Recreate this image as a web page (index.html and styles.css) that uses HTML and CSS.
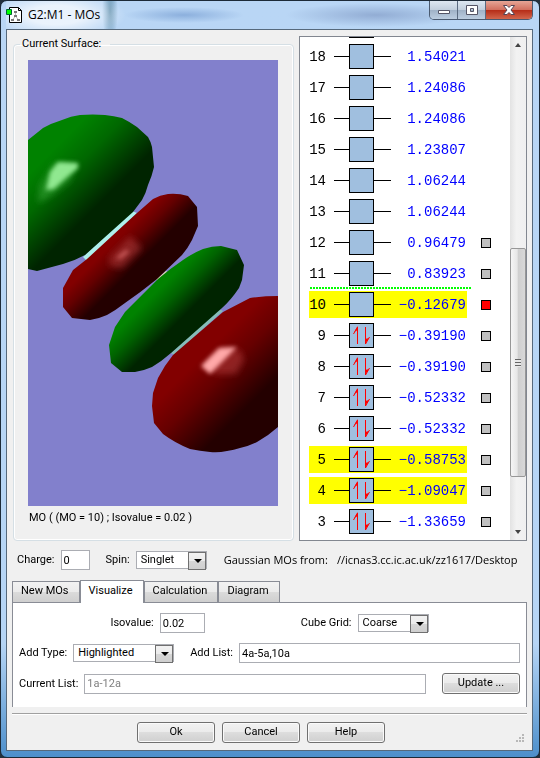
FILE: index.html
```
<!DOCTYPE html>
<html lang="en">
<head>
    <meta charset="UTF-8">
    <meta name="viewport" content="width=device-width, initial-scale=1.0">
    <title>G2:M1 - MOs</title>
    <link rel="stylesheet" href="styles.css">
</head>
<body>
    <div class="window">
        <header class="titlebar">
            <svg class="app-icon" width="17" height="17" viewBox="0 0 17 17">
                <path d="M3.5 .5h9l3 3v12h-12z" fill="#fff" stroke="#000"/>
                <path d="M12.500 .5v3h3" fill="none" stroke="#000"/>
                <path d="M9.500 5v4l-3 4M9.500 9l3 4" fill="none" stroke="#bbb"/>
                <path d="M8 4h3v2H8zM8 8h3v2H8zM5 12h3v2H5zM11 12h3v2h-3z" fill="#777"/>
                <path d="M.5 2.500h5v5h-5z" fill="#0f0" stroke="#063"/>
            </svg>
            <h1>G2:M1 - MOs</h1>
            <div class="window-buttons">
                <button type="button" class="minimize" aria-label="Minimize">
                    <svg width="14" height="12" viewBox="0 0 14 12"><path d="M1.500 6.500h11v3h-11z" fill="#fff" stroke="#556"/></svg>
                </button>
                <button type="button" class="maximize" aria-label="Maximize">
                    <svg width="14" height="12" viewBox="0 0 14 12"><path d="M1.500 1.500h11v9h-11zM5.500 4.500v3h3v-3z" fill="#fff" fill-rule="evenodd" stroke="#556"/></svg>
                </button>
                <button type="button" class="close" aria-label="Close">
                    <svg width="14" height="12" viewBox="0 0 14 12"><path d="M1.500 1.500h3.500l2 2 2-2h3.500l-3.500 4.500 3.500 4.500h-3.500l-2-2-2 2h-3.500l3.500-4.500z" fill="#fff" stroke="#545"/></svg>
                </button>
            </div>
        </header>

        <main class="client">
            <div class="top">
                <fieldset class="surface">
                    <legend>Current Surface:</legend>
                    <svg class="view" viewBox="0 0 250 446" preserveAspectRatio="xMidYMid slice">
                        <defs>
                            <linearGradient id="g1" gradientUnits="userSpaceOnUse" x1="40" y1="75" x2="90" y2="125">
                                <stop offset="0" stop-color="#008200"/><stop offset=".4" stop-color="#006800"/><stop offset="1" stop-color="#002400"/>
                            </linearGradient>
                            <linearGradient id="r1" gradientUnits="userSpaceOnUse" x1="134" y1="134" x2="157" y2="157">
                                <stop offset="0" stop-color="#820000"/><stop offset=".4" stop-color="#640000"/><stop offset="1" stop-color="#240000"/>
                            </linearGradient>
                            <linearGradient id="g2" gradientUnits="userSpaceOnUse" x1="180" y1="180" x2="206" y2="206">
                                <stop offset="0" stop-color="#008200"/><stop offset=".4" stop-color="#006400"/><stop offset="1" stop-color="#002400"/>
                            </linearGradient>
                            <linearGradient id="r2" gradientUnits="userSpaceOnUse" x1="230" y1="240" x2="278" y2="288">
                                <stop offset="0" stop-color="#820000"/><stop offset=".4" stop-color="#660000"/><stop offset="1" stop-color="#240000"/>
                            </linearGradient>
                            <filter id="soft" x="-50%" y="-50%" width="200%" height="200%"><feGaussianBlur stdDeviation="3"/></filter>
                            <filter id="shine" x="-50%" y="-50%" width="200%" height="200%"><feGaussianBlur stdDeviation="2"/></filter>
                        </defs>
                        <rect width="250" height="446" fill="#8280cc"/>
                        <path d="M55 197L104 151l5 2L59 201z" fill="#aef0ec"/>
                        <path d="M128 219l10-8 3 2-10 8z" fill="#d8d0b8"/>
                        <path d="M143 293L191 249l4 2-49 44z" fill="#86bcb8"/>
                        <path fill="url(#g1)" d="M0 80L15 68Q24 63 34 60Q43 56 52 55Q65 54 77 55Q86 56 94 58Q102 62 109 67L120 77Q123 82 124 87L126 107Q124 116 120 125Q118 133 114 140L105 152 57 195Q46 201 35 204L9 211 0 209z"/>
                        <path fill="url(#r1)" d="M109 153L125 139Q132 135 140 134Q150 133 160 136L169 147 170 166 164 180Q160 188 154 195L129 219Q113 232 97 243Q88 250 79 255Q70 259 62 260L44 258 35 247V228L45 210 59 199z"/>
                        <path fill="url(#g2)" d="M130 219Q143 208 155 200Q165 193 175 189Q184 186 193 186L209 190 216 205 214 220 211 228Q203 240 194 248L143 293Q134 301 124 307Q115 311 107 312H94L83 303 81 285 87 267 97 252z"/>
                        <path fill="url(#r2)" d="M195 252L222 238Q236 236 250 236V367Q240 376 229 382 221 386 212 388 206 390 199 391 190 393 182 392 172 391 162 389 147 383 135 374L126 363 124 346 125 333 130 318Q136 306 145 295z"/>
                        <g filter="url(#soft)">
                            <path d="M12 125l14-22 22 2-6 16-18 14-14 8z" fill="#40b040" opacity=".5"/>
                            <path d="M82 196l20-20 12 12-20 20-12-2z" fill="#b84040" opacity=".5"/>
                            <path d="M176 306l18-18 18 2 4 10-8 14h-20z" fill="#b84040" opacity=".5"/>
                        </g>
                        <g filter="url(#shine)">
                            <path d="M18 130l4-18 8-10 20 1 0 5-12 10-12 11z" fill="#90e890"/>
                            <path d="M88 198l9-8 5 1-9 8z" fill="#c85858"/>
                            <path d="M173 306l18-18 18-1-20 20-7 7z" fill="#ffa8a8"/>
                        </g>
                    </svg>
                    <p class="caption">MO ( (MO = 10) ; Isovalue = 0.02 )</p>
                </fieldset>

                <div class="mo-box">
                    <ol class="mo-list" id="moList"></ol>
                    <div class="scrollbar">
                        <span class="arrow up"></span>
                        <div class="track"><div class="thumb"></div></div>
                        <span class="arrow down"></span>
                    </div>
                </div>
            </div>

            <div class="info">
                <label for="charge">Charge:</label>
                <input type="text" id="charge" class="w-charge" value="0">
                <label for="spin">Spin:</label>
                <span class="select w-spin"><select id="spin"><option>Singlet</option><option>Triplet</option></select></span>
                <p class="source"><span>Gaussian MOs from:</span><span>//icnas3.cc.ic.ac.uk/zz1617/Desktop</span></p>
            </div>

            <div class="tabs" role="tablist">
                <button type="button" role="tab">New MOs</button>
                <button type="button" role="tab" class="active" aria-selected="true">Visualize</button>
                <button type="button" role="tab">Calculation</button>
                <button type="button" role="tab">Diagram</button>
            </div>
            <div class="panel" role="tabpanel">
                <div class="row centered">
                    <div class="field">
                        <label for="isovalue">Isovalue:</label>
                        <input type="text" id="isovalue" class="w-iso" value="0.02">
                    </div>
                    <div class="field">
                        <label for="grid">Cube Grid:</label>
                        <span class="select w-spin"><select id="grid"><option>Coarse</option><option>Medium</option><option>Fine</option></select></span>
                    </div>
                </div>
                <div class="row">
                    <div class="field">
                        <label for="addType">Add Type:</label>
                        <span class="select w-type"><select id="addType"><option>Highlighted</option><option>All</option></select></span>
                    </div>
                    <div class="field grow">
                        <label for="addList">Add List:</label>
                        <input type="text" id="addList" value="4a-5a,10a">
                    </div>
                </div>
                <div class="row">
                    <div class="field grow">
                        <label for="currentList">Current List:</label>
                        <input type="text" id="currentList" value="1a-12a" disabled>
                    </div>
                    <button type="button" class="btn">Update ...</button>
                </div>
            </div>

            <footer class="footer">
                <button type="button" class="btn">Ok</button>
                <button type="button" class="btn">Cancel</button>
                <button type="button" class="btn">Help</button>
                <svg class="grip" width="8" height="8" viewBox="0 0 8 8" fill="#b8b8b8"><path d="M6 0h2v2H6zM3 3h2v2H3zM6 3h2v2H6zM0 6h2v2H0zM3 6h2v2H3zM6 6h2v2H6z"/></svg>
            </footer>
        </main>
    </div>

    <script src="orbitals.js"></script>
</body>
</html>
```
FILE: styles.css
```
* {
    box-sizing: border-box;
}
body {
    margin: 0;
    background: #23303c;
    font-family: Roboto, "Liberation Sans", sans-serif;
    font-size: 11px;
    line-height: 16px;
    color: #000;
}
h1, p, ol {
    margin: 0;
    padding: 0;
    font-weight: normal;
}
button, input, select {
    font: inherit;
    color: inherit;
    margin: 0;
}
.window {
    display: flex;
    flex-direction: column;
    min-height: 100vh;
    padding: 0 6px 6px 5px;
    border: 1px solid #1c2a38;
    border-radius: 7px;
    background: linear-gradient(to bottom, #b9d6f5 0, #b6d5f5 85%, #4d8fcb 100%);
}

/* title bar */
.titlebar {
    display: flex;
    align-items: center;
    height: 28px;
    background:
        radial-gradient(ellipse 70px 24px at 50px 14px, rgba(255, 255, 255, 0.7) 40%, transparent),
        radial-gradient(ellipse 8px 30px at 104px 10px, #5f8fae, transparent),
        radial-gradient(ellipse 60px 8px at 178px 14px, rgba(110, 150, 205, 0.6), transparent),
        radial-gradient(ellipse 90px 12px at 370px 14px, rgba(120, 145, 190, 0.6), transparent);
}
.app-icon {
    flex: none;
}
h1 {
    flex: 1;
    margin-left: 5px;
    font-family: "Open Sans", sans-serif;
    font-size: 12px;
}
.window-buttons {
    display: flex;
    align-self: flex-start;
    border: 1px solid #4a5a70;
    border-top: 0;
    border-radius: 0 0 5px 5px;
    overflow: hidden;
}
.window-buttons button {
    display: flex;
    align-items: center;
    justify-content: center;
    width: 28px;
    height: 18px;
    padding: 0;
    border: 0;
    border-right: 1px solid #5a6a80;
    background: linear-gradient(#dde7f1 0, #c2cfdd 48%, #9fb1c6 50%, #bccde0 100%);
}
.window-buttons .close {
    width: 46px;
    border-right: 0;
    background: linear-gradient(#e6a596 0, #d2705f 48%, #b52b16 50%, #d2664c 100%);
}

/* client area */
.client {
    flex: 1;
    padding: 6px 5px 0;
    border: 1px solid #56697c;
    background: #f0f0f0;
}
.top {
    display: flex;
    gap: 5px;
}
.surface {
    flex: 1;
    min-width: 0;
    margin: 0 0 0 1px;
    padding: 8px 15px 0 14px;
    border: 1px solid #d5dfe5;
    border-radius: 4px;
    box-shadow: inset 0 0 0 1px #fff;
}
.surface legend {
    margin-left: -8px;
    padding: 0 9px 0 2px;
}
.view {
    display: block;
    width: 100%;
    height: 446px;
}
.caption {
    margin-top: 4px;
    padding-left: 1px;
}

/* orbital list */
.mo-box {
    display: flex;
    width: 228px;
    height: 505px;
    border: 1px solid #828790;
    background: #fff;
}
.mo-list {
    flex: 1;
    display: flex;
    flex-direction: column;
    justify-content: flex-end;
    padding: 0 0 3px 9px;
    overflow: hidden;
    list-style: none;
    font-family: "Liberation Mono", monospace;
    font-size: 14px;
}
.mo {
    position: relative;
    flex: none;
    display: flex;
    align-items: center;
    gap: 14px;
    height: 31px;
}
.mo.lumo::before {
    content: "";
    position: absolute;
    top: -2px;
    left: 1px;
    width: 161px;
    height: 2px;
    background: repeating-linear-gradient(to right, #0f0 0, #0f0 2px, #fff 2px, #fff 3px);
}
.level {
    display: flex;
    align-items: center;
    width: 158px;
    height: 27px;
}
.level.highlight {
    background: #ff0;
}
.num {
    width: 17px;
    text-align: right;
}
.orbital {
    flex: none;
    margin-left: 8px;
}
.energy {
    flex: 1;
    padding-right: 1px;
    text-align: right;
    color: #00f;
}
.mo input {
    appearance: none;
    width: 10px;
    height: 10px;
    border: 1px solid #000;
    background: #c0c0c0;
}
.mo input:checked {
    background: #f00;
}
.scrollbar {
    display: flex;
    flex-direction: column;
    width: 16px;
    background: linear-gradient(to right, #e3e3e3, #f2f2f2 40%, #f0f0f0);
}
.track {
    flex: 1;
    padding-top: 194px;
}
.thumb {
    height: 229px;
    border: 1px solid #979797;
    border-radius: 2px;
    background:
        repeating-linear-gradient(#666 0, #666 1px, #e8e8e8 1px, #e8e8e8 3px) center / 6px 8px no-repeat,
        linear-gradient(to right, #f5f5f5, #e6e6e6 45%, #cfcfcf 50%, #d8d8d8);
}
.arrow {
    height: 17px;
    background: #444;
    clip-path: polygon(5px 10px, 8px 6px, 11px 10px);
}
.arrow.down {
    clip-path: polygon(5px 7px, 11px 7px, 8px 11px);
}

/* form controls */
input[type="text"] {
    min-width: 0;
    height: 20px;
    padding: 1px 2px;
    border: 1px solid #abadb3;
    background: #fff;
}
input[type="text"]:disabled {
    color: #808080;
}
.select {
    position: relative;
    flex: none;
}
.select select {
    display: block;
    appearance: none;
    width: 100%;
    height: 18px;
    padding: 0 20px 2px 4px;
    border: 1px solid #abadb3;
    border-radius: 0;
    background: #fff;
}
.select::before {
    content: "";
    position: absolute;
    top: 1px;
    right: 1px;
    width: 16px;
    height: 16px;
    border: 1px solid #707070;
    background: linear-gradient(#f2f2f2 0, #ebebeb 48%, #d6d6d6 50%, #cfcfcf 100%);
    pointer-events: none;
}
.select::after {
    content: "";
    position: absolute;
    top: 8px;
    right: 5px;
    border: 4px solid transparent;
    border-top-color: #000;
    border-bottom: 0;
    pointer-events: none;
}
.w-charge {
    width: 29px;
}
.w-iso {
    width: 45px;
}
.w-spin {
    width: 71px;
}
.w-type {
    width: 101px;
}
.info {
    display: flex;
    align-items: center;
    gap: 6px;
    height: 20px;
    margin: 9px 5px 10px;
}
.info input {
    margin-right: 10px;
}
.source {
    flex: 1;
    display: flex;
    gap: 9px;
    min-width: 0;
    margin-left: 11px;
    overflow: hidden;
    white-space: nowrap;
    font-family: "Open Sans", sans-serif;
}

/* tabs */
.tabs {
    display: flex;
    align-items: flex-end;
}
.tabs button {
    height: 21px;
    padding: 0 10px 2px 8px;
    border: 1px solid #898c95;
    border-bottom: 0;
    background: linear-gradient(#f2f2f2 0, #ebebeb 48%, #dbdbdb 50%, #cfcfcf 100%);
}
.tabs .active {
    position: relative;
    height: 23px;
    margin-bottom: -1px;
    background: #fff;
}
.panel {
    display: flex;
    flex-direction: column;
    gap: 10px;
    padding: 10px 6px 13px;
    border: 1px solid #898c95;
    border-bottom: 0;
    background: #fff;
}
.row {
    display: flex;
    align-items: center;
    gap: 16px;
}
.row.centered {
    justify-content: center;
    gap: 96px;
}
.field {
    display: flex;
    align-items: center;
    gap: 6px;
}
.grow, .grow input {
    flex: 1;
}
.btn {
    width: 78px;
    height: 21px;
    padding: 0 0 1px;
    border: 1px solid #707070;
    border-radius: 3px;
    box-shadow: inset 0 0 0 1px #fafafa;
    background: linear-gradient(#f2f2f2 0, #ebebeb 48%, #dddddd 50%, #cfcfcf 100%);
}
.footer {
    position: relative;
    display: flex;
    justify-content: center;
    gap: 7px;
    margin-top: 6px;
    padding: 8px 17px 7px 0;
    border-top: 1px solid #a0a0a0;
    box-shadow: inset 0 1px 0 #fff;
}
.grip {
    position: absolute;
    right: 3px;
    bottom: 8px;
}
```
FILE: orbitals.js
```
const SVG_LINES = '<path d="M0 13.5h57" stroke="#000"/><rect x="15.5" y="1.5" width="24" height="24" fill="#a0bfdf" stroke="#000"/>';
const SVG_ELECTRONS = '<path d="M23.5 22V5l-4 7M31.500 5v17l4-7" fill="none" stroke="#f00"/><path d="M24 4v4l-4 2zM31 22v-5l4-1z" fill="#f00"/>';

// number, energy, occupied, highlighted, has a surface box
const orbitals = [
    [18, '1.54021', false, false, false],
    [17, '1.24086', false, false, false],
    [16, '1.24086', false, false, false],
    [15, '1.23807', false, false, false],
    [14, '1.06244', false, false, false],
    [13, '1.06244', false, false, false],
    [12, '0.96479', false, false, true],
    [11, '0.83923', false, false, true],
    [10, '−0.12679', false, true, true],
    [9, '−0.39190', true, false, true],
    [8, '−0.39190', true, false, true],
    [7, '−0.52332', true, false, true],
    [6, '−0.52332', true, false, true],
    [5, '−0.58753', true, true, true],
    [4, '−1.09047', true, true, true],
    [3, '−1.33659', true, false, true]
];

const rows = orbitals.map(([n, energy, occupied, highlight, box]) => `
    <li class="mo${n === 10 ? ' lumo' : ''}">
        <div class="level${highlight ? ' highlight' : ''}">
            <span class="num">${n}</span>
            <svg class="orbital" width="57" height="27">${SVG_LINES}${occupied ? SVG_ELECTRONS : ''}</svg>
            <span class="energy">${energy}</span>
        </div>
        ${box ? `<input type="checkbox" aria-label="Surface ${n}"${n === 10 ? ' checked' : ''}>` : ''}
    </li>`);

// the next orbital up is scrolled out, only its box edge shows
rows.unshift(`
    <li class="mo" aria-hidden="true">
        <div class="level">
            <span class="num"></span>
            <svg class="orbital" width="57" height="27">${SVG_LINES}</svg>
        </div>
    </li>`);

document.getElementById('moList').innerHTML = rows.join('');
```
